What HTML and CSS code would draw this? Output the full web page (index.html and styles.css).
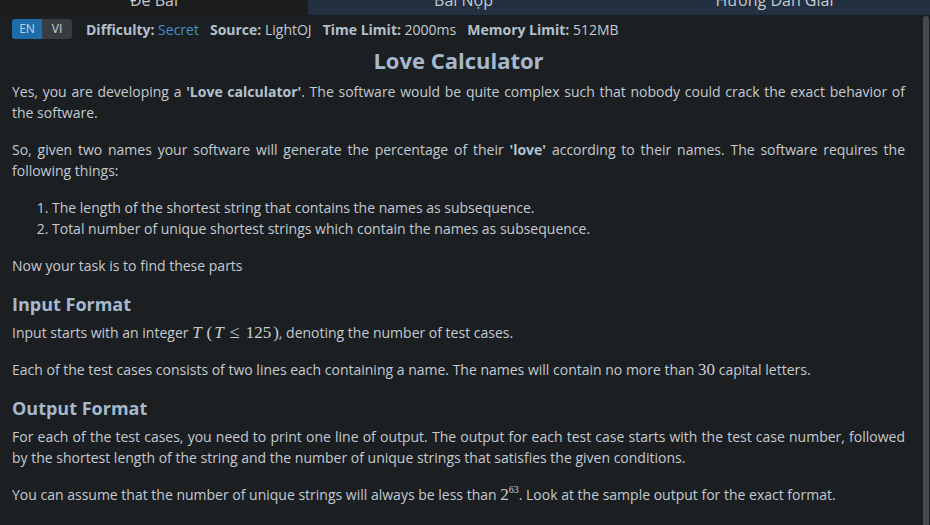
FILE: index.html
```html
<!DOCTYPE html>
<html lang="en">
<head>
<meta charset="utf-8">
<title>Love Calculator</title>
<link rel="stylesheet" href="styles.css">
</head>
<body>
<div class="app">
  <nav class="tabs">
    <div class="tab tab-active">Đề Bài</div>
    <div class="tab">Bài Nộp</div>
    <div class="tab">Hướng Dẫn Giải</div>
  </nav>
  <div class="body">
    <main class="content">
      <div class="meta">
        <div class="lang">
          <span class="lang-btn lang-on">EN</span><span class="lang-btn">VI</span>
        </div>
        <span class="meta-item"><b>Difficulty:</b> <span class="link">Secret</span></span>
        <span class="meta-item"><b>Source:</b> LightOJ</span>
        <span class="meta-item"><b>Time Limit:</b> 2000ms</span>
        <span class="meta-item"><b>Memory Limit:</b> 512MB</span>
      </div>
      <h1 class="title">Love Calculator</h1>
      <p>Yes, you are developing a <b>'Love calculator'</b>. The software would be quite complex such that nobody could crack the exact behavior of the software.</p>
      <p>So, given two names your software will generate the percentage of their <b>'love'</b> according to their names. The software requires the following things:</p>
      <ol>
        <li>The length of the shortest string that contains the names as subsequence.</li>
        <li>Total number of unique shortest strings which contain the names as subsequence.</li>
      </ol>
      <p>Now your task is to find these parts</p>
      <h2>Input Format</h2>
      <p>Input starts with an integer <span class="math"><i>T</i><span class="paren open">(</span><i>T</i><span class="rel">≤</span>125<span class="paren close">)</span></span>, denoting the number of test cases.</p>
      <p>Each of the test cases consists of two lines each containing a name. The names will contain no more than <span class="math">30</span> capital letters.</p>
      <h2>Output Format</h2>
      <p>For each of the test cases, you need to print one line of output. The output for each test case starts with the test case number, followed by the shortest length of the string and the number of unique strings that satisfies the given conditions.</p>
      <p>You can assume that the number of unique strings will always be less than <span class="math">2<sup>63</sup></span>. Look at the sample output for the exact format.</p>
    </main>
    <div class="scrollbar"><div class="thumb"></div></div>
  </div>
</div>
</body>
</html>
```
FILE: styles.css
```css
html, body {
  margin: 0;
  padding: 0;
  background: #1c1f22;
  overflow: hidden;
}
body {
  font-family: "Open Sans", "Noto Sans", sans-serif;
  font-size: 14px;
  line-height: 1.5;
  color: #c3cad1;
}
.app {
  width: 930px;
  height: 525px;
  overflow: hidden;
  display: flex;
  flex-direction: column;
}
.tabs {
  display: grid;
  grid-template-columns: 308px 1fr 1fr;
  height: 28px;
  margin-top: -14px;
  flex: none;
}
.tab {
  background: #22303f;
  color: #c3cad1;
  font-size: 16px;
  line-height: 29px;
  text-align: center;
}
.tab-active {
  background: #1a1c1e;
}
.body {
  flex: 1;
  display: flex;
  min-height: 0;
}
.content {
  flex: 1;
  padding: 5px 17px 0 12px;
  overflow: hidden;
}
.scrollbar {
  width: 8px;
  flex: none;
  display: flex;
  flex-direction: column;
  padding-top: 2px;
}
.thumb {
  flex: 1;
  width: 6px;
  margin-left: 1px;
  background: #45484c;
  border-radius: 3px 3px 0 0;
}
.meta {
  display: flex;
  align-items: center;
  gap: 11px;
  height: 20px;
  margin-bottom: 8px;
}
.lang {
  display: flex;
  border-radius: 3px;
  overflow: hidden;
  margin-right: 3px;
}
.lang-btn {
  width: 30px;
  height: 20px;
  line-height: 20px;
  text-align: center;
  font-size: 12px;
  background: #393d41;
  color: #cdd3d9;
}
.lang-on {
  background: #1f6ca9;
}
.meta-item b {
  color: #b3c0cd;
  font-weight: 700;
}
.link {
  color: #3f90d0;
}
.title {
  margin: 0 0 8px;
  text-align: center;
  font-size: 22px;
  line-height: 26px;
  font-weight: 700;
  color: #a5b8cc;
}
p {
  margin: 0 0 16px;
  text-align: justify;
}
p b {
  color: #b3c2d1;
}
ol {
  margin: 0 0 16px;
  padding-left: 40px;
}
h2 {
  margin: 1px 0 5px;
  font-size: 18px;
  line-height: 25px;
  font-weight: 700;
  color: #a5b8cc;
}
.math {
  font-family: "Liberation Serif", "DejaVu Serif", serif;
  font-size: 17px;
  line-height: 1;
  color: #c8cfd6;
}
.math i {
  font-style: italic;
}
.math .open {
  margin: 0 2px 0 5px;
}
.math .close {
  margin-left: 2px;
}
.math .rel {
  margin: 0 6px;
  font-size: 18px;
}
.math sup {
  font-size: 10px;
  line-height: 0;
  vertical-align: 7px;
}
```
